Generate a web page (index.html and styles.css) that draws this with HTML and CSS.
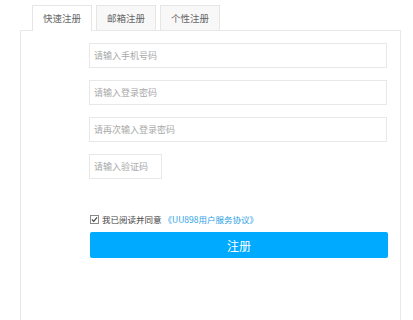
FILE: index.html
```html
<!DOCTYPE html>
<html lang="zh-CN">
<head>
    <meta charset="UTF-8">
    <meta name="viewport" content="width=device-width, initial-scale=1.0">
    <title>注册</title>
    <link rel="stylesheet" href="styles.css">
</head>
<body>
    <div class="register">
        <!-- Tabs -->
        <div class="tabs">
            <div class="tab active">快速注册</div>
            <div class="tab">邮箱注册</div>
            <div class="tab">个性注册</div>
        </div>

        <!-- Form panel -->
        <div class="panel">
            <form class="reg-form">
                <input type="text" class="field" placeholder="请输入手机号码">
                <input type="password" class="field" placeholder="请输入登录密码">
                <input type="password" class="field" placeholder="请再次输入登录密码">
                <input type="text" class="field code" placeholder="请输入验证码">

                <label class="agree">
                    <svg class="check" width="9" height="9" viewBox="0 0 9 9">
                        <rect x="0.5" y="0.5" width="8" height="8" fill="#fff" stroke="#8a8a8a"/>
                        <path d="M2 4.5 L3.8 6.3 L7 2.4" fill="none" stroke="#444" stroke-width="1.2"/>
                    </svg>
                    我已阅读并同意 <a href="#" class="terms">《UU898用户服务协议》</a>
                </label>

                <button type="button" class="submit">注册</button>
            </form>
        </div>
    </div>
</body>
</html>
```

FILE: styles.css
```css
body {
    margin: 0;
    background-color: #fff;
    font-family: "Noto Sans CJK SC", "Liberation Sans", sans-serif;
}

.register {
    padding: 5px 12px 0 20px;
}

.tabs {
    display: flex;
    gap: 4px;
    padding-left: 12px;
    margin-bottom: -1px;
}

.tab {
    width: 58px;
    height: 24px;
    line-height: 24px;
    text-align: center;
    font-size: 9.5px;
    color: #666;
    background-color: #f8f8f8;
    border: 1px solid #e6e6e6;
    border-bottom: none;
}

.tab.active {
    background-color: #fff;
    position: relative;
    z-index: 1;
    height: 25px;
}

.panel {
    border: 1px solid #e8e8e8;
    border-bottom: none;
    height: 300px;
}

.reg-form {
    display: flex;
    flex-direction: column;
    align-items: flex-start;
    padding: 12px 13px 0 68px;
}

.field {
    box-sizing: border-box;
    width: 100%;
    height: 25px;
    margin: 0 0 12px;
    padding: 0 4px;
    border: 1px solid #e8e8e8;
    font-family: inherit;
    font-size: 9px;
    color: #333;
    outline: none;
}

.field::placeholder {
    color: #a8a8a8;
}

.field.code {
    width: 73px;
}

.agree {
    display: flex;
    align-items: center;
    margin-top: 21px;
    margin-left: 1px;
    height: 14px;
    font-size: 8.5px;
    color: #444;
}

.check {
    margin-right: 3px;
}

.terms {
    color: #2aa0e6;
    text-decoration: none;
    margin-left: 2px;
}

.submit {
    width: 298px;
    height: 26px;
    margin-top: 6px;
    margin-left: 1px;
    border: none;
    border-radius: 2px;
    background-color: #00aaff;
    color: #fff;
    font-family: inherit;
    font-size: 12px;
    cursor: pointer;
}
```
